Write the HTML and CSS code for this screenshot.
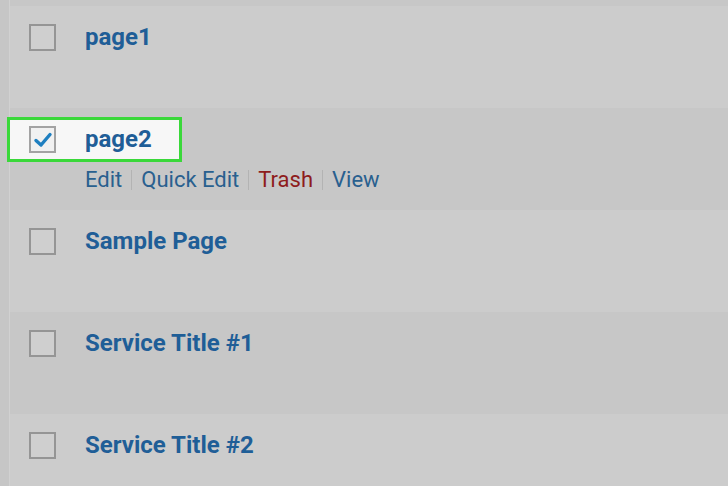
FILE: index.html
```html
<!DOCTYPE html>
<html lang="en">
<head>
  <meta charset="UTF-8" />
  <meta name="viewport" content="width=device-width, initial-scale=1.0"/>
  <title>Pages</title>
  <link rel="stylesheet" href="styles.css">
</head>
<body>
  <div class="screen">
    <div class="gutter"></div>

    <div class="pages">
      <div class="row row-alt row-top"></div>

      <div class="row">
        <span class="check"></span>
        <div class="cell">
          <a class="title" href="#">page1</a>
        </div>
      </div>

      <div class="row row-alt">
        <div class="highlight"></div>
        <span class="check checked">
          <svg viewBox="0 0 20 20" width="20" height="20">
            <path d="M3 10.5 L8 15 L17 4.5" fill="none" stroke="#1e7fc0" stroke-width="3.4" stroke-linecap="round" stroke-linejoin="round"/>
          </svg>
        </span>
        <div class="cell">
          <a class="title" href="#">page2</a>
          <div class="actions">
            <a href="#">Edit</a><span class="sep"></span><a href="#">Quick Edit</a><span class="sep"></span><a href="#" class="trash">Trash</a><span class="sep"></span><a href="#">View</a>
          </div>
        </div>
      </div>

      <div class="row">
        <span class="check"></span>
        <div class="cell">
          <a class="title" href="#">Sample Page</a>
        </div>
      </div>

      <div class="row row-alt">
        <span class="check"></span>
        <div class="cell">
          <a class="title" href="#">Service Title #1</a>
        </div>
      </div>

      <div class="row">
        <span class="check"></span>
        <div class="cell">
          <a class="title" href="#">Service Title #2</a>
        </div>
      </div>
    </div>
  </div>
</body>
</html>
```

FILE: styles.css
```css
body {
  margin: 0;
  background-color: #cccccc;
  font-family: Roboto, "Liberation Sans", sans-serif;
  overflow: hidden;
}

.screen {
  display: flex;
  height: 486px;
  overflow: hidden;
}

.gutter {
  width: 9px;
  background-color: #c6c6c6;
  border-right: 1px solid #d1d1d1;
  flex-shrink: 0;
}

.pages {
  flex: 1;
}

.row {
  position: relative;
  display: flex;
  align-items: flex-start;
  height: 102px;
  box-sizing: border-box;
  padding-left: 19px;
  background-color: #cccccc;
}

.row-alt {
  background-color: #c7c7c7;
}

.row-top {
  height: 6px;
}

.check {
  position: relative;
  z-index: 1;
  display: flex;
  align-items: center;
  justify-content: center;
  width: 27px;
  height: 27px;
  box-sizing: border-box;
  margin-top: 18px;
  border: 2px solid #959595;
  background-color: #cfcfcf;
  flex-shrink: 0;
}

.check.checked {
  border-color: #a3a3a3;
  background-color: #f1f1f1;
}

.cell {
  position: relative;
  z-index: 1;
  margin-left: 29px;
  padding-top: 17px;
}

.title {
  display: block;
  font-size: 24px;
  line-height: 28px;
  font-weight: bold;
  color: #1f5e97;
  text-decoration: none;
}

.actions {
  margin-top: 14px;
  font-size: 22px;
  line-height: 26px;
  display: flex;
  align-items: center;
}

.actions a {
  color: #29608f;
  text-decoration: none;
}

.actions a.trash {
  color: #8e1c1c;
}

.sep {
  display: inline-block;
  width: 1px;
  height: 20px;
  margin: 0 9px;
  background-color: #b3b3b3;
}

.highlight {
  position: absolute;
  top: 9px;
  left: -3px;
  width: 175px;
  height: 45px;
  box-sizing: border-box;
  border: 3px solid #3ad83a;
  background-color: #f7f7f7;
}
```
